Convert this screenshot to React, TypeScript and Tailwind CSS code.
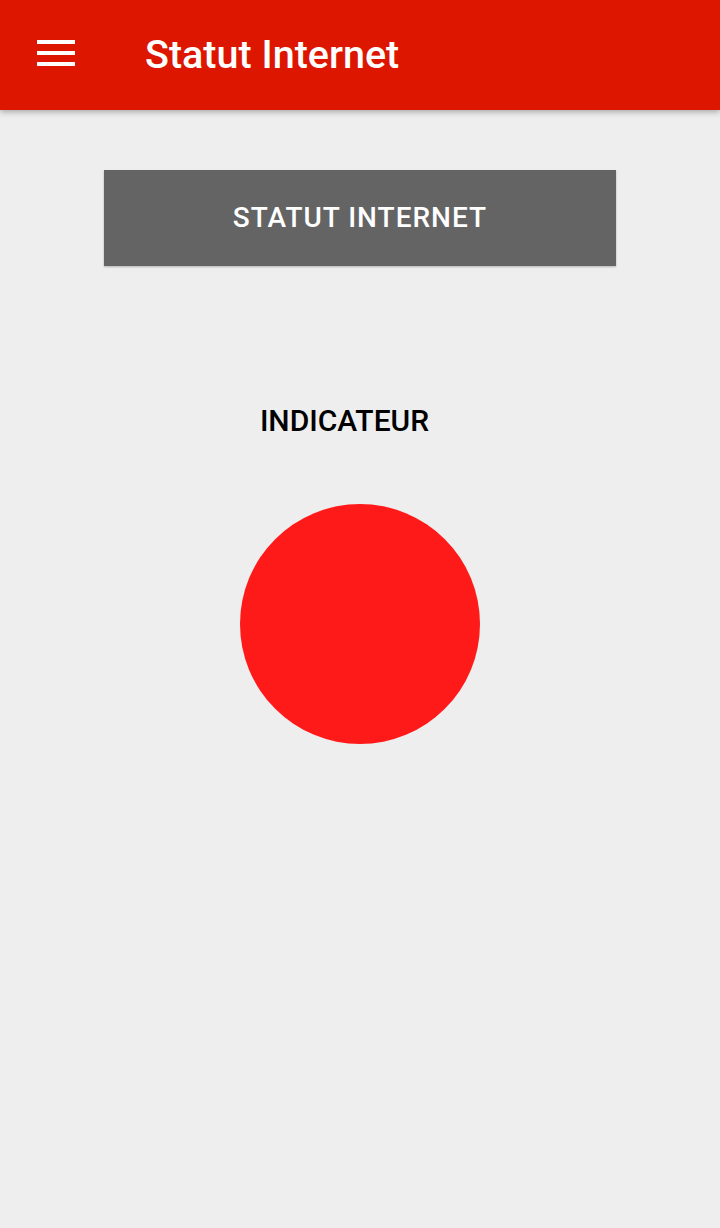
export default function App() {
  return (
    <div
      className="w-[720px] h-[1228px] bg-[#eeeeee] flex flex-col overflow-hidden"
      style={{ fontFamily: "Roboto, 'Noto Sans', sans-serif" }}
    >
      <div className="h-[110px] bg-[#dd1600] flex items-center shrink-0 shadow-[0_2px_6px_rgba(0,0,0,0.3)] relative z-10">
        <div className="ml-[37px] w-[38px] flex flex-col gap-[7px] mt-[-4px]">
          <div className="h-[4px] bg-white" />
          <div className="h-[4px] bg-white" />
          <div className="h-[4px] bg-white" />
        </div>
        <div className="ml-[70px] text-white text-[39.5px] font-medium leading-none mt-[0px]">
          Statut Internet
        </div>
      </div>
      <div className="flex flex-col items-center">
        <div className="mt-[60px] w-[512px] h-[96px] bg-[#646464] flex items-center justify-center shadow-[0_1px_2px_rgba(0,0,0,0.25)]">
          <span className="text-white text-[28px] font-medium leading-none tracking-[1px]">
            STATUT INTERNET
          </span>
        </div>
        <div className="mt-[140px] mr-[31px] text-[30px] font-medium text-black leading-none">
          INDICATEUR
        </div>
        <div className="mt-[68px] w-[240px] h-[240px] rounded-full bg-[#ff1a1a]" />
      </div>
    </div>
  );
}
